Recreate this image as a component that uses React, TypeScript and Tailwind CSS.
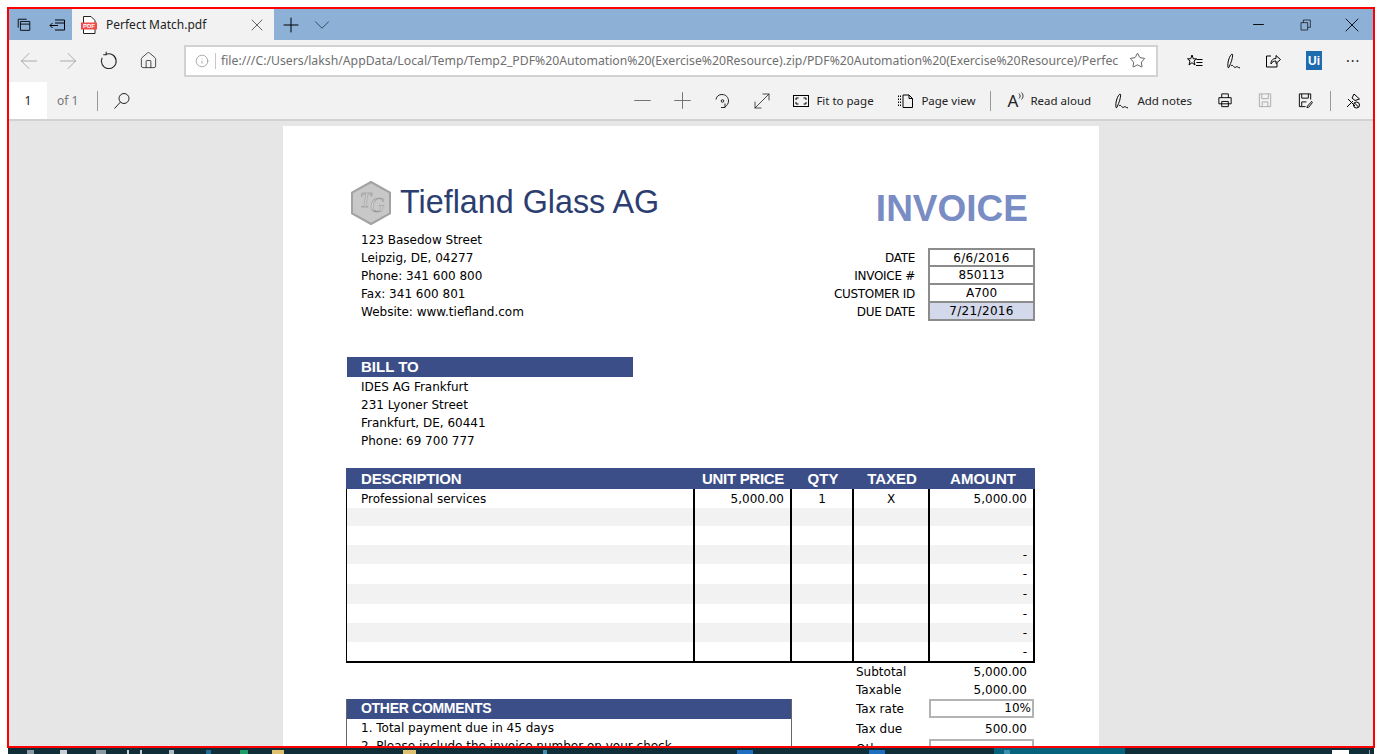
import { ArrowLeft, ArrowRight, ChevronDown, Home, Info, Minus, MoveDiagonal, Plus, Star, X } from 'lucide-react';
import type { ReactNode } from 'react';

const BODY = "font-['DejaVu_Sans',sans-serif]";
const HEAD = "font-['Liberation_Sans',Arial,sans-serif]";

function Svg({ children, className = '', size = 18 }: { children: ReactNode; className?: string; size?: number }) {
  return (
    <svg width={size} height={size} viewBox="0 0 18 18" fill="none" stroke="currentColor" strokeWidth="1" className={`shrink-0 ${className}`}>
      {children}
    </svg>
  );
}

function NoteIcon() {
  return (
    <Svg>
      <path d="M3 15.5 C2 10 5 3 7 2 C8.5 2 7 9 4.5 14 C4 15.5 3.5 16 3 15.5 Z" />
      <path d="M6 14 C8 11.5 9 17 11 15 C12 14 13 15.5 15 16" />
    </Svg>
  );
}

function ToolLabel({ icon, label, width, className = '' }: { icon: ReactNode; label: string; width: number; className?: string }) {
  return (
    <div className={`flex items-center gap-[6px] ${className}`}>
      {icon}
      <span style={{ width }} className="whitespace-nowrap text-[11.5px] text-[#222]">{label}</span>
    </div>
  );
}

function InfoRow({ label, value, hi, first, wide }: { label: string; value: string; hi?: boolean; first?: boolean; wide?: boolean }) {
  return (
    <div className={`flex items-center ${first ? 'h-[19px]' : 'h-[18px]'}`}>
      <span className={`flex w-[80px] justify-end whitespace-nowrap tracking-[-0.3px] ${first ? 'pt-px' : ''}`}>{label}</span>
      <span className={`ml-[13px] flex w-[107px] items-center justify-center border-x-2 border-b-2 border-[#8c8c8c] ${first ? 'h-[19px] border-t-2' : 'h-[18px]'} ${wide ? 'tracking-[0.35px]' : ''} ${hi ? 'bg-[#d3d9eb]' : 'bg-white'}`}>{value}</span>
    </div>
  );
}

const ROW_HEIGHTS = [19, 18, 19, 19, 20, 20, 19, 19, 19];
const rows = ROW_HEIGHTS.map((h, i) => ({
  h,
  desc: i === 0 ? 'Professional services' : '',
  price: i === 0 ? '5,000.00' : '',
  qty: i === 0 ? '1' : '',
  taxed: i === 0 ? 'X' : '',
  amount: i === 0 ? '5,000.00' : i >= 3 ? '-' : '',
}));

function ItemTable() {
  return (
    <div className="ml-[63px] w-[689px] text-[12px] text-black">
      <div className={`grid h-[21px] grid-cols-[348px_97px_62px_76px_106px] items-center bg-[#3b4e87] text-[15px] font-bold text-white ${HEAD}`}>
        <span className="pl-[15px] tracking-[-0.2px]">DESCRIPTION</span>
        <span className="pl-[8px] tracking-[-0.3px]">UNIT PRICE</span>
        <span className="pl-[2px] text-center">QTY</span>
        <span className="pl-[2px] text-center">TAXED</span>
        <span className="pl-[2px] text-center">AMOUNT</span>
      </div>
      <div className="border-b-2 border-l border-r-2 border-black">
        {rows.map((r, i) => (
          <div key={i} style={{ height: r.h }} className={`grid grid-cols-[346px_97px_62px_76px_1fr] items-center ${i % 2 ? 'bg-[#f2f2f2]' : 'bg-white'}`}>
            <span className="h-full pl-[14px] pt-px leading-[18px]">{r.desc}</span>
            <span className="h-full border-l-2 border-black pr-[6px] pt-px text-right leading-[18px]">{r.price}</span>
            <span className="h-full border-l-2 border-black pt-px text-center leading-[18px]">{r.qty}</span>
            <span className="h-full border-l-2 border-black pt-px text-center leading-[18px]">{r.taxed}</span>
            <span className="h-full border-l-2 border-black pr-[6px] pt-px text-right leading-[18px]">{r.amount}</span>
          </div>
        ))}
      </div>
    </div>
  );
}

function Total({ label, value, h = 18 }: { label: string; value: string; h?: number }) {
  return (
    <div style={{ height: h }} className="flex items-center">
      <span className="w-[76px] pl-[3px]">{label}</span>
      <span className="w-[98px] text-right">{value}</span>
    </div>
  );
}

function Invoice() {
  return (
    <div className={`mx-auto mt-[5px] h-[700px] w-[816px] bg-white pt-[50px] text-[12px] leading-[18px] text-black ${BODY}`}>
      <div className="flex justify-between pr-[71px]">
        <div className="ml-[67px] mt-[4px] flex h-[46px] items-center gap-[8px]">
          <svg width="42" height="46" viewBox="0 0 42 46" className="shrink-0">
            <path d="M21 2 L40 12.5 L40 33.5 L21 44 L2 33.5 L2 12.5 Z" fill="#c8c8c8" stroke="#a2a2a2" strokeWidth="2" />
            <text x="10" y="27" fontSize="20" fontStyle="italic" fontFamily="Liberation Serif" fill="#d8d8d8" stroke="#8f8f8f" strokeWidth=".5">T</text>
            <text x="20" y="32" fontSize="20" fontStyle="italic" fontFamily="Liberation Serif" fill="#d8d8d8" stroke="#8f8f8f" strokeWidth=".5">G</text>
          </svg>
          <span className={`pb-[2px] text-[32.3px] leading-[40px] text-[#2c3e70] ${HEAD}`}>Tiefland Glass AG</span>
        </div>
        <div className={`mt-[10px] h-[43px] text-[37px] font-bold leading-[46px] text-[#7a8cc4] ${HEAD}`}>INVOICE</div>
      </div>

      <div className="mt-[2px] flex justify-between pr-[64px]">
        <div className="ml-[78px]">
          <div>123 Basedow Street</div>
          <div>Leipzig, DE, 04277</div>
          <div>Phone: 341 600 800</div>
          <div>Fax: 341 600 801</div>
          <div>Website: www.tiefland.com</div>
        </div>
        <div className="mt-[17px]">
          <InfoRow label="DATE" value="6/6/2016" first wide />
          <InfoRow label="INVOICE #" value="850113" />
          <InfoRow label="CUSTOMER ID" value="A700" />
          <InfoRow label="DUE DATE" value="7/21/2016" hi wide />
        </div>
      </div>

      <div className={`ml-[64px] mt-[36px] h-[20px] w-[286px] bg-[#3b4e87] pl-[14px] text-[15px] font-bold leading-[20px] text-white ${HEAD}`}>BILL TO</div>
      <div className="ml-[78px] mt-px">
        <div>IDES AG Frankfurt</div>
        <div>231 Lyoner Street</div>
        <div>Frankfurt, DE, 60441</div>
        <div>Phone: 69 700 777</div>
      </div>

      <div className="mt-[18px]">
        <ItemTable />
      </div>

      <div className="ml-[63px] flex">
        <div className="mt-[36px] w-[446px] self-start border-x border-[#666]">
          <div className={`h-[20px] bg-[#3b4e87] pl-[14px] text-[14px] font-bold leading-[18px] tracking-[-0.3px] text-white ${HEAD}`}>OTHER COMMENTS</div>
          <div className="pl-[14px]">1. Total payment due in 45 days</div>
          <div className="pl-[14px]">2. Please include the invoice number on your check</div>
        </div>
        <div className="ml-[61px] -mt-px">
          <Total label="Subtotal" value="5,000.00" h={19} />
          <Total label="Taxable" value="5,000.00" />
          <div className="flex h-[19px] items-center">
            <span className="w-[76px] pl-[3px]">Tax rate</span>
            <span className="h-[19px] w-[105px] border-2 border-[#b3b3b3] pr-px text-right leading-[15px]">10%</span>
          </div>
          <Total label="Tax due" value="500.00" h={21} />
          <div className="flex h-[19px] items-center">
            <span className="w-[76px] pl-[3px]">Other</span>
            <span className="h-[19px] w-[105px] border-2 border-[#b3b3b3]" />
          </div>
        </div>
      </div>
    </div>
  );
}

const TASKBAR_BITS = [
  { x: 27, w: 7, c: '#8a9aa0' },
  { x: 60, w: 7, c: '#c8d0d4' },
  { x: 96, w: 10, c: '#8a9aa0' },
  { x: 127, w: 2, c: '#c8d0d4' },
  { x: 140, w: 2, c: '#c8d0d4' },
  { x: 169, w: 5, c: '#b0bcc0' },
  { x: 206, w: 5, c: '#1d6f9a' },
  { x: 240, w: 8, c: '#1f9d66' },
  { x: 272, w: 12, c: '#e0c26e' },
  { x: 403, w: 13, c: '#e0c26e' },
  { x: 543, w: 4, c: '#3f8fb0' },
  { x: 737, w: 16, c: '#1f6fc0' },
  { x: 869, w: 16, c: '#1f6fc0' },
  { x: 994, w: 131, c: '#05637b' },
  { x: 1004, w: 6, c: '#3f8fb0' },
  { x: 1332, w: 17, c: '#ffffff' },
  { x: 1369, w: 1, c: '#8a9aa0' },
];

export default function App() {
  return (
    <div className={`relative h-[754px] w-[1382px] overflow-hidden bg-white pl-[7px] pt-[7px] ${"font-['Noto_Sans',sans-serif]"}`}>
      <div className="flex h-[741px] w-[1368px] flex-col overflow-hidden border-2 border-[#ff0000]">
        {/* tab strip */}
        <div className="flex h-[31px] shrink-0 items-center bg-[#8cb0d6] text-black">
          <div className="flex w-[63px] items-center gap-[17px] pl-[7px]">
            <Svg size={16}>
              <path d="M2.5 12V2.5H12M5 15V5H15.5V15H5ZM5 8H15.5" />
            </Svg>
            <Svg size={18}>
              <path d="M6 4H15.5V14H6M6 7H15.5M1 9.5H9M3.5 7L1 9.5L3.5 12" />
            </Svg>
          </div>
          <div className="flex h-[31px] w-[202px] items-center bg-[#f2f2f2] pl-[9px]">
            <svg width="16" height="18" viewBox="0 0 16 18" className="shrink-0">
              <path d="M2.5 .5H10L14 4.5V17.5H2.5Z" fill="#fff" stroke="#222" />
              <rect x="0" y="6.5" width="16" height="7" fill="#f04a4a" />
              <text x="8" y="12.3" textAnchor="middle" fontSize="6" fontWeight="700" fill="#fff" fontFamily="Liberation Sans">PDF</text>
            </svg>
            <span className="ml-[9px] w-[141px] whitespace-nowrap text-[12px] text-[#222]">Perfect Match.pdf</span>
            <X size={20} strokeWidth={0.9} className="text-[#333]" />
          </div>
          <Plus size={24} strokeWidth={1} className="ml-[5px]" />
          <ChevronDown size={26} strokeWidth={0.8} className="ml-[6px] text-[#2c3e50]" />
          <div className="ml-auto flex items-center gap-[33px] pr-[14px]">
            <Minus size={17} strokeWidth={1.3} />
            <Svg size={12}>
              <path d="M1.5 5.5H11.5V16.5H1.5ZM5 5.5V1.5H15.5V12.5H11.5" />
            </Svg>
            <X size={24} strokeWidth={0.9} className="-mx-[5px]" />
          </div>
        </div>

        {/* address bar */}
        <div className="flex h-[41px] shrink-0 items-center bg-[#f2f2f2]">
          <div className="flex w-[39px] justify-center">
            <ArrowLeft size={26} strokeWidth={0.8} className="text-[#a0a0a0]" />
          </div>
          <div className="flex w-[40px] justify-center">
            <ArrowRight size={26} strokeWidth={0.8} className="text-[#a0a0a0]" />
          </div>
          <div className="flex w-[40px] justify-center">
            <Svg size={19} className="text-[#222]">
              <path d="M6.5 3.2A7 7 0 1 1 3 6.5" />
              <path d="M6.8 .8V3.6H4" />
            </Svg>
          </div>
          <div className="flex w-[40px] justify-center">
            <Home size={19} strokeWidth={1} className="text-[#222]" />
          </div>
          <div className="ml-[16px] flex h-[32px] w-[974px] items-center border-2 border-[#d2d2d2] bg-white">
            <Info size={14} strokeWidth={1} className="ml-[9px] shrink-0 text-[#777]" />
            <span className="ml-[6px] h-[16px] w-px shrink-0 bg-[#c8c8c8]" />
            <span className="ml-[5px] w-[898px] shrink-0 whitespace-nowrap pt-[2px] text-[12.25px] text-[#6f6f6f]">file:///C:/Users/laksh/AppData/Local/Temp/Temp2_PDF%20Automation%20(Exercise%20Resource).zip/PDF%20Automation%20(Exercise%20Resource)/Perfec</span>
            <Star size={17} strokeWidth={1} className="ml-[10px] shrink-0 text-[#222]" />
          </div>
          <div className="ml-[28px] flex items-center gap-[21px]">
            <Svg size={18}>
              <path d="M6 3L7.3 6.8H10.5L8 9L9 13L6 10.7L3 13L4 9L1.5 6.8H4.7ZM10.5 7.5H16.5M10.5 10.5H16.5M10 13.5H16.5" />
            </Svg>
            <NoteIcon />
            <Svg size={18}>
              <path d="M7 4H2.5V15H13V11M7 12C7 7.5 9.5 6.5 12 6.5V3.5L16.5 7.5L12 11.5V9C10 9 8 9.5 7 12Z" />
            </Svg>
            <div className={`ml-[3px] flex h-[19px] w-[16px] items-center justify-center bg-[#1e6bb0] text-[12px] font-bold text-white ${HEAD}`}>Ui</div>
            <span className="ml-[3px] text-[14px] leading-none tracking-[1px] text-[#222]">···</span>
          </div>
        </div>

        {/* pdf toolbar */}
        <div className="flex h-[40px] shrink-0 items-center border-b-2 border-[#d2d2d2] bg-[#f2f2f2] pt-px">
          <div className="flex h-full w-[38px] items-center justify-center bg-white text-[12px] text-[#222]">1</div>
          <span className="ml-[10px] text-[12px] text-[#777]">of 1</span>
          <span className="ml-[19px] h-[20px] w-px bg-[#999]" />
          <Svg size={18} className="ml-[15px] text-[#222]">
            <circle cx="11" cy="6.5" r="5" />
            <path d="M7.5 10L1.5 16.5" />
          </Svg>
          <div className="ml-[491px] flex w-[40px] justify-center">
            <Minus size={27} strokeWidth={0.8} className="text-[#666]" />
          </div>
          <div className="flex w-[40px] justify-center">
            <Plus size={27} strokeWidth={0.8} className="text-[#666]" />
          </div>
          <div className="flex w-[40px] justify-center">
            <Svg className="text-[#222]">
              <path d="M3 7.5C3.5 4 6 2.5 9 2.5C13 2.5 15.5 5.5 15.5 9C15.5 11.5 14 13.5 12 15M12 11.5V15.5H8" />
              <circle cx="9.5" cy="9" r="1.3" />
            </Svg>
          </div>
          <div className="flex w-[40px] justify-center">
            <MoveDiagonal size={24} strokeWidth={0.8} className="text-[#222]" />
          </div>
          <ToolLabel
            className="ml-[10px]"
            label="Fit to page"
            width={57}
            icon={
              <Svg size={18}>
                <rect x="1.5" y="3.5" width="15" height="11" />
                <path d="M4 8V6H6.5M11.5 6H14V8M14 10V12H11.5M6.5 12H4V10" />
              </Svg>
            }
          />
          <ToolLabel
            className="ml-[24px]"
            label="Page view"
            width={53}
            icon={
              <Svg size={18}>
                <path d="M1.5 3.5V15.5M3.5 3.5V15.5" strokeDasharray="1.5 1.5" />
                <path d="M6 3H12L15.5 6.5V15.5H6ZM12 3V6.5H15.5" />
              </Svg>
            }
          />
          <span className="ml-[16px] h-[20px] w-px bg-[#999]" />
          <ToolLabel
            className="ml-[16px]"
            label="Read aloud"
            width={60}
            icon={
              <span className="flex w-[17px] items-start text-[17px] leading-none text-[#222]">
                A
                <svg width="6" height="9" viewBox="0 0 6 9" fill="none" stroke="currentColor" strokeWidth="0.9" className="shrink-0">
                  <path d="M1 1.5C2.5 3 2.5 5 1 6.5M3.5 .5C5.5 2.5 5.5 5.5 3.5 7.5" />
                </svg>
              </span>
            }
          />
          <ToolLabel className="ml-[23px]" label="Add notes" width={55} icon={<NoteIcon />} />
          <div className="ml-[25px] flex items-center gap-[23px]">
            <Svg size={17}>
              <path d="M5 6V2H12V6M2 6H15V12.5H2ZM5 10H12V15.5H5Z" />
            </Svg>
            <Svg size={17} className="text-[#aaa]">
              <path d="M2.5 2H14.5V15.5H2.5ZM5 2V7H12V2M5.5 15.5V10.5H11.5V15.5" />
            </Svg>
            <Svg size={17}>
              <path d="M2.5 2H14.5V8M9 15.5H2.5V2M5 2V6.5H12V2M5 15V10.5H10M11 15L16 9.5M11 15L10.5 16.5L12.5 16L16.5 11" />
            </Svg>
          </div>
          <span className="ml-[16px] h-[20px] w-px bg-[#999]" />
          <Svg size={18} className="ml-[13px]">
            <path d="M10 2L15.5 7L11 8.5L8 6ZM9 9L3 15M4 7L11 14" />
            <circle cx="12.5" cy="13" r="3" />
            <path d="M10.5 11L14.5 15" />
          </Svg>
        </div>

        {/* document area */}
        <div className="min-h-0 flex-1 overflow-hidden bg-[#e6e6e6]">
          <Invoice />
        </div>
      </div>

      {/* taskbar peeking out under the screenshot frame */}
      <div className="absolute bottom-0 left-[8px] h-[6px] w-[1366px] bg-[#0f2e38]">
        {TASKBAR_BITS.map((b) => (
          <span key={b.x} style={{ left: b.x - 8, width: b.w, background: b.c, top: b.w > 100 ? 0 : 2 }} className="absolute bottom-0" />
        ))}
      </div>
    </div>
  );
}
